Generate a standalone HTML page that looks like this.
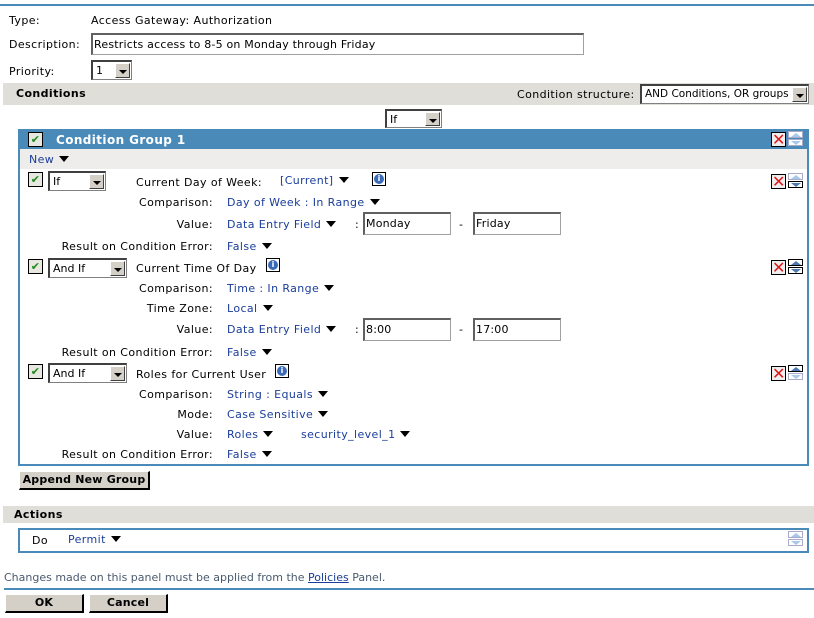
<!DOCTYPE html><html><head><meta charset="utf-8"><style>
body{margin:0;width:814px;height:618px;position:relative;background:#fff;font-family:"DejaVu Sans","Liberation Sans",sans-serif;font-size:11px;letter-spacing:0.4px;color:#000;overflow:hidden}
.a{position:absolute;white-space:nowrap}
.r{position:absolute;white-space:nowrap;text-align:right;width:200px}
.b{color:#1a3d9a}
.tri{display:inline-block;width:0;height:0;border-left:5px solid transparent;border-right:5px solid transparent;border-top:6px solid #000;margin-left:5px;vertical-align:1px}
.inp{position:absolute;border:1px solid #a0a0a0;border-top:2px solid #606060;border-left:2px solid #606060;background:#fff;box-sizing:border-box;padding:3px 1px;line-height:14px;letter-spacing:0.2px}
.sel{position:absolute;border:1px solid #808080;border-top:2px solid #404040;border-left:2px solid #404040;background:#fff;box-sizing:border-box;padding:2px 3px;line-height:13px;overflow:hidden;letter-spacing:0}
.sel i{position:absolute;right:1px;top:1px;bottom:1px;width:15px;background:#d4d0c8;border:1px solid #fff;border-right-color:#404040;border-bottom-color:#404040;box-sizing:border-box}
.sel i:after{content:"";position:absolute;left:3px;top:6px;border-left:4px solid transparent;border-right:4px solid transparent;border-top:4px solid #000}
.cb{position:absolute;width:15px;height:15px;box-sizing:border-box;border:1px solid #000;background:#e8e8e0;color:#1a8a1a;font-size:11px;line-height:13px;text-align:center;font-weight:bold}
.x{position:absolute;width:15px;height:15px;box-sizing:border-box;border:1px solid #000;background:#eee;color:#e01818;font-size:16px;line-height:13px;text-align:center;font-weight:bold}
.ud{position:absolute;width:15px;height:16px}
.ud b,.ud u{position:absolute;left:0;width:15px;height:7px;border:1px solid #aac;box-sizing:border-box;background:#fff}
.ud b{top:0}.ud u{top:8px}
.ud b:after{content:"";position:absolute;left:2px;top:1px;border-left:5px solid transparent;border-right:5px solid transparent;border-bottom:4px solid #a8c8e8}
.ud u:after{content:"";position:absolute;left:2px;top:1px;border-left:5px solid transparent;border-right:5px solid transparent;border-top:4px solid #a8c8e8}
.ud.d u{border-color:#000}.ud.d u:after{border-top-color:#4a7ab0}
.ud.e b{border-color:#000}.ud.e b:after{border-bottom-color:#4a7ab0}
.info{position:absolute;width:14px;height:14px;box-sizing:border-box;border:1px solid #000;background:#fff}
.info:after{content:"i";position:absolute;left:1px;top:1px;width:10px;height:10px;border-radius:50%;background:#3a6ab8;color:#fff;font-size:8px;line-height:10px;text-align:center;font-weight:bold;letter-spacing:0}
.bar{position:absolute;left:3px;right:0;background:#e0ded8;font-weight:bold}
.btn{position:absolute;background:#d4d0c8;border:1px solid #fff;border-right:2px solid #000;border-bottom:2px solid #000;box-sizing:border-box;text-align:center;font-weight:bold;line-height:15px;letter-spacing:0.2px}
</style></head><body>
<div class="a" style="left:0;top:1px;width:814px;height:3px;border-bottom:2px solid #4a8ab8"></div>
<div class="a" style="left:9px;top:14px">Type:</div>
<div class="a" style="left:91px;top:14px">Access Gateway: Authorization</div>
<div class="a" style="left:9px;top:38px">Description:</div>
<div class="inp" style="left:91px;top:33px;width:493px;height:22px">Restricts access to 8-5 on Monday through Friday</div>
<div class="a" style="left:9px;top:65px">Priority:</div>
<div class="sel" style="left:91px;top:60px;width:41px;height:20px">1<i></i></div>
<div class="bar" style="top:83px;height:22px;line-height:22px;padding-left:13px">Conditions</div>
<div class="a" style="left:517px;top:88px">Condition structure:</div>
<div class="sel" style="left:640px;top:84px;width:169px;height:20px;font-size:10.5px">AND Conditions, OR groups<i></i></div>
<div class="sel" style="left:385px;top:109px;width:57px;height:19px">If<i></i></div>

<div class="a" style="left:18px;top:129px;width:787px;height:333px;border:2px solid #4a8ab8"></div>
<div class="a" style="left:20px;top:131px;width:787px;height:18px;background:#4a8ab8"></div>
<div class="cb" style="left:28px;top:132px">✔</div>
<div class="a" style="left:56px;top:131px;line-height:18px;color:#fff;font-weight:bold;font-size:12px">Condition Group 1</div>
<div class="x" style="left:771px;top:132px">✕</div><div class="ud" style="left:788px;top:131px"><b></b><u></u></div>
<div class="a" style="left:20px;top:149px;width:787px;height:20px;background:#eeedeb"></div>
<div class="a b" style="left:29px;top:153px">New<span class="tri"></span></div>

<div class="cb" style="left:28px;top:172px">✔</div>
<div class="sel" style="left:48px;top:171px;width:58px;height:20px">If<i></i></div>
<div class="a" style="left:136px;top:176px">Current Day of Week:</div>
<div class="a b" style="left:280px;top:174px">[Current]<span class="tri"></span></div>
<div class="info" style="left:372px;top:172px"></div>
<div class="x" style="left:771px;top:174px">✕</div><div class="ud d" style="left:788px;top:173px"><b></b><u></u></div>
<div class="r" style="left:13px;top:196px">Comparison:</div><div class="a b" style="left:227px;top:196px">Day of Week : In Range<span class="tri"></span></div>
<div class="r" style="left:13px;top:218px">Value:</div><div class="a b" style="left:227px;top:218px">Data Entry Field<span class="tri"></span></div>
<div class="a" style="left:355px;top:218px">:</div>
<div class="inp" style="left:363px;top:212px;width:88px;height:23px">Monday</div>
<div class="a" style="left:459px;top:218px">-</div>
<div class="inp" style="left:473px;top:212px;width:88px;height:23px">Friday</div>
<div class="r" style="left:13px;top:240px">Result on Condition Error:</div><div class="a b" style="left:227px;top:240px">False<span class="tri"></span></div>

<div class="cb" style="left:28px;top:259px">✔</div>
<div class="sel" style="left:48px;top:258px;width:79px;height:20px">And If<i></i></div>
<div class="a" style="left:136px;top:262px">Current Time Of Day</div>
<div class="info" style="left:266px;top:258px"></div>
<div class="x" style="left:771px;top:260px">✕</div><div class="ud d e" style="left:788px;top:259px"><b></b><u></u></div>
<div class="r" style="left:13px;top:282px">Comparison:</div><div class="a b" style="left:227px;top:282px">Time : In Range<span class="tri"></span></div>
<div class="r" style="left:13px;top:302px">Time Zone:</div><div class="a b" style="left:227px;top:302px">Local<span class="tri"></span></div>
<div class="r" style="left:13px;top:323px">Value:</div><div class="a b" style="left:227px;top:323px">Data Entry Field<span class="tri"></span></div>
<div class="a" style="left:355px;top:323px">:</div>
<div class="inp" style="left:363px;top:318px;width:88px;height:23px">8:00</div>
<div class="a" style="left:459px;top:323px">-</div>
<div class="inp" style="left:473px;top:318px;width:88px;height:23px">17:00</div>
<div class="r" style="left:13px;top:346px">Result on Condition Error:</div><div class="a b" style="left:227px;top:346px">False<span class="tri"></span></div>

<div class="cb" style="left:28px;top:364px">✔</div>
<div class="sel" style="left:48px;top:363px;width:79px;height:20px">And If<i></i></div>
<div class="a" style="left:136px;top:368px">Roles for Current User</div>
<div class="info" style="left:275px;top:364px"></div>
<div class="x" style="left:771px;top:366px">✕</div><div class="ud e" style="left:788px;top:365px"><b></b><u></u></div>
<div class="r" style="left:13px;top:388px">Comparison:</div><div class="a b" style="left:227px;top:388px">String : Equals<span class="tri"></span></div>
<div class="r" style="left:13px;top:408px">Mode:</div><div class="a b" style="left:227px;top:408px">Case Sensitive<span class="tri"></span></div>
<div class="r" style="left:13px;top:428px">Value:</div><div class="a b" style="left:227px;top:428px">Roles<span class="tri"></span></div>
<div class="a b" style="left:301px;top:428px">security_level_1<span class="tri"></span></div>
<div class="r" style="left:13px;top:448px">Result on Condition Error:</div><div class="a b" style="left:227px;top:448px">False<span class="tri"></span></div>

<div class="btn" style="left:19px;top:471px;width:131px;height:19px">Append New Group</div>
<div class="bar" style="top:506px;height:17px;line-height:17px;padding-left:11px">Actions</div>
<div class="a" style="left:18px;top:528px;width:787px;height:21px;border:2px solid #4a8ab8"></div>
<div class="a" style="left:32px;top:534px">Do</div>
<div class="a b" style="left:68px;top:533px">Permit<span class="tri"></span></div>
<div class="ud" style="left:788px;top:531px"><b></b><u></u></div>
<div class="a" style="left:4px;top:571px;color:#4a5a70;letter-spacing:0">Changes made on this panel must be applied from the <span style="color:#1a3d9a;text-decoration:underline">Policies</span> Panel.</div>
<div class="a" style="left:4px;top:588px;width:810px;height:2px;background:#4a8ab8"></div>
<div class="btn" style="left:5px;top:594px;width:79px;height:19px">OK</div>
<div class="btn" style="left:89px;top:594px;width:79px;height:19px">Cancel</div>
</body></html>
